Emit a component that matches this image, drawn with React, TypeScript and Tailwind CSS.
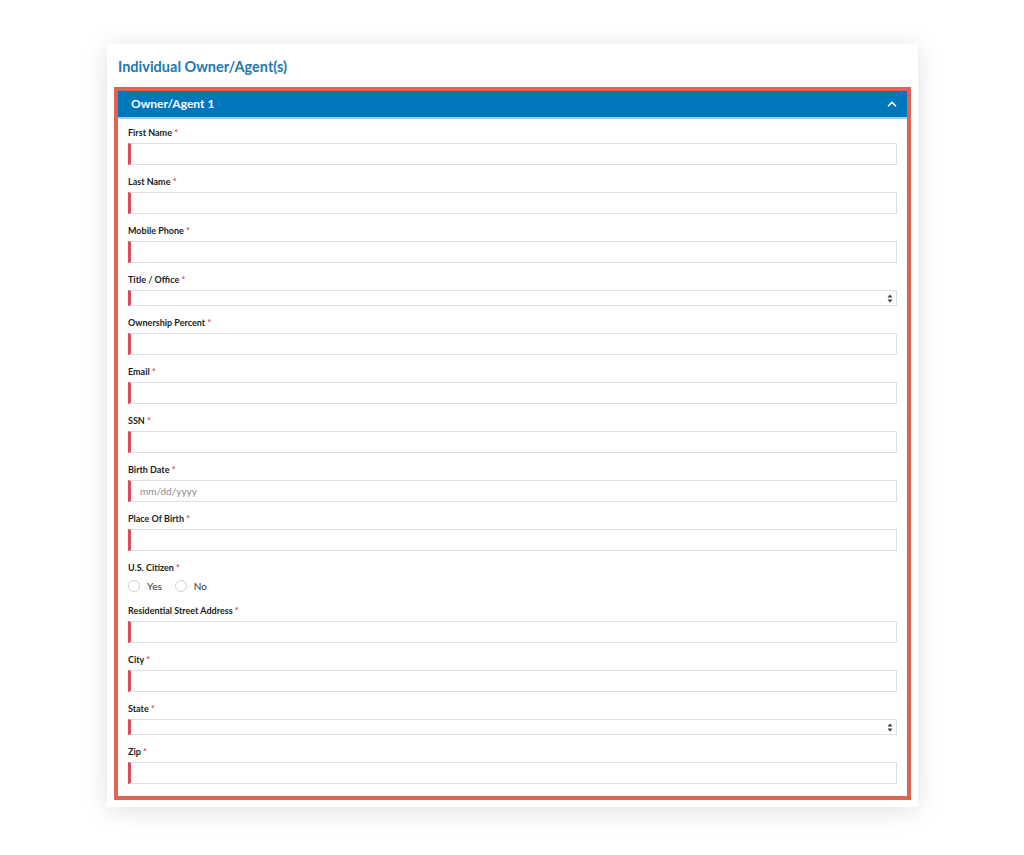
import { ChevronUp } from 'lucide-react'

type Field = {
  label: string
  kind: 'text' | 'select' | 'radio'
  placeholder?: string
}

const fields: Field[] = [
  { label: 'First Name', kind: 'text' },
  { label: 'Last Name', kind: 'text' },
  { label: 'Mobile Phone', kind: 'text' },
  { label: 'Title / Office', kind: 'select' },
  { label: 'Ownership Percent', kind: 'text' },
  { label: 'Email', kind: 'text' },
  { label: 'SSN', kind: 'text' },
  { label: 'Birth Date', kind: 'text', placeholder: 'mm/dd/yyyy' },
  { label: 'Place Of Birth', kind: 'text' },
  { label: 'U.S. Citizen', kind: 'radio' },
  { label: 'Residential Street Address', kind: 'text' },
  { label: 'City', kind: 'text' },
  { label: 'State', kind: 'select' },
  { label: 'Zip', kind: 'text' },
]

const SelectArrows = () => (
  <svg width="6" height="9" viewBox="0 0 6 9" className="text-[#3d3d3d]">
    <path d="M3 0.5 L5.5 3.5 H0.5 Z" fill="currentColor" />
    <path d="M3 8.5 L5.5 5.5 H0.5 Z" fill="currentColor" />
  </svg>
)

const FormField = ({ field }: { field: Field }) => {
  return (
    <div className="flex flex-col">
      <label className="text-[9px] leading-[12px] font-bold text-[#1b1b1b]">
        {field.label} <span className="text-[#d54d5b]">*</span>
      </label>

      {field.kind === 'text' && (
        <div className="mt-[4px] flex h-[22px] items-center border border-[#dcdee0] border-l-[3px] border-l-[#d54d5b] bg-white pl-[9px]">
          {field.placeholder && (
            <span className="text-[10px] text-[#8a8a8a]">{field.placeholder}</span>
          )}
        </div>
      )}

      {field.kind === 'select' && (
        <div className="mt-[4px] flex h-[16px] items-center justify-end border border-[#dcdee0] border-l-[3px] border-l-[#d54d5b] bg-white pr-[3px]">
          <SelectArrows />
        </div>
      )}

      {field.kind === 'radio' && (
        <div className="mt-[4px] flex h-[16px] items-center gap-[7px] text-[10px] text-[#333]">
          <span className="h-[12px] w-[12px] rounded-full border border-[#cfd1d3] bg-white" />
          <span className="mr-[6px]">Yes</span>
          <span className="h-[12px] w-[12px] rounded-full border border-[#cfd1d3] bg-white" />
          <span>No</span>
        </div>
      )}
    </div>
  )
}

export default function App() {
  return (
    <div
      className="min-h-screen bg-white pt-[44px] pl-[107px]"
      style={{ fontFamily: 'Lato, "Open Sans", sans-serif' }}
    >
      <div className="w-[811px] bg-white px-[7px] pt-[14px] pb-[7px] shadow-[0_3px_24px_rgba(0,0,0,0.13)]">
        <h2 className="pl-[4px] text-[14.5px] leading-[18px] font-bold text-[#2378ad]">
          Individual Owner/Agent(s)
        </h2>

        <div className="mt-[11px] border-4 border-[#dc6450]">
          <div className="flex h-[28px] items-center justify-between border-b-2 border-[#8fd6f5] bg-[#0076bb] pr-[8px] pl-[13px]">
            <span className="text-[12px] font-bold text-white">Owner/Agent 1</span>
            <ChevronUp size={14} strokeWidth={3} className="text-white" />
          </div>

          <div className="flex flex-col gap-[11px] px-[10px] pt-[8px] pb-[12px]">
            {fields.map((field) => (
              <FormField key={field.label} field={field} />
            ))}
          </div>
        </div>
      </div>
    </div>
  )
}
